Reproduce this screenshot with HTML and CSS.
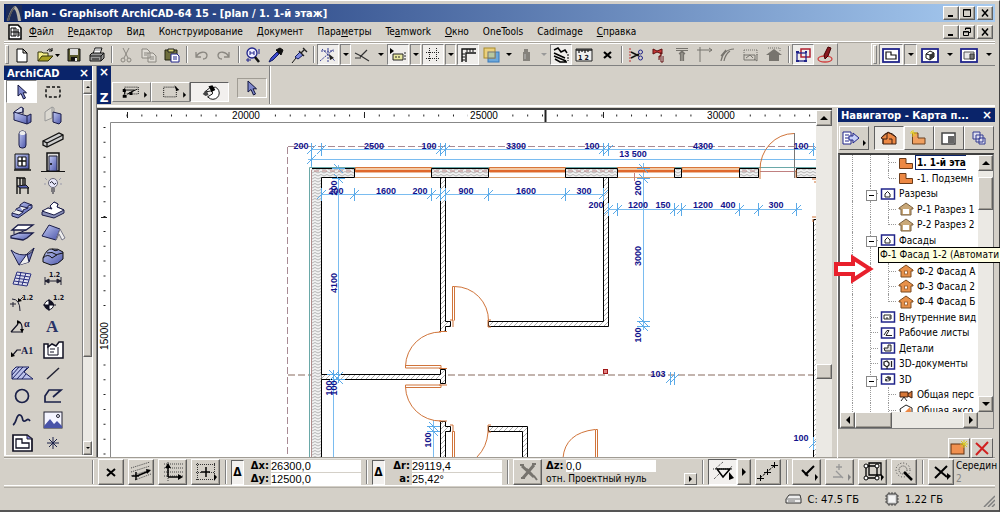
FILE: index.html
```html
<!DOCTYPE html>
<html lang="ru">
<head>
<meta charset="utf-8">
<title>plan - Graphisoft ArchiCAD-64 15</title>
<link rel="stylesheet" href="styles.css">
</head>
<body>
<svg class="defs" aria-hidden="true">
  <defs>
    <linearGradient id="gb" x1="0" y1="0" x2="1" y2="1"><stop offset="0" stop-color="#c4ccf4"/><stop offset="1" stop-color="#4a54a8"/></linearGradient>
    <pattern id="hatch" width="5" height="5" patternUnits="userSpaceOnUse"><rect width="5" height="5" fill="#fff"/><path d="M-1 6L6-1M-1 1L1-1M4 6L6 4" stroke="#999" stroke-width=".8"/></pattern>
    <pattern id="wave" width="6" height="3" patternUnits="userSpaceOnUse"><rect width="6" height="3" fill="#f2f2f2"/><path d="M0 2L3 .5L6 2" stroke="#999" stroke-width=".7" fill="none"/></pattern>
    <g id="tick"><path d="M.5-6V7M-4 5L5-4" stroke="#5aaae8" fill="none"/></g>
    <g id="tickv"><path d="M-6 .5H7M-4-4L5 5" stroke="#5aaae8" fill="none"/></g>
    <symbol id="cursor" viewBox="0 0 12 16"><path d="M2 1V12L5 9.5L7.5 15L9.5 14L7 8.8H10.5Z" fill="#7f88cc" stroke="#11143c"/></symbol>
    <symbol id="house" viewBox="0 0 16 14"><path d="M1 6L8 1L15 6V7H13V13H3V7H1Z" fill="#e8914a" stroke="#7a4a20"/><rect x="6.500" y="7" width="3" height="3" fill="#fff" stroke="#a86a38"/></symbol>
    <symbol id="section" viewBox="0 0 16 14"><path d="M1 6L8 1L15 6V7H13V13H3V7H1Z" fill="#c9a878" stroke="#7a6040"/><rect x="5" y="7" width="6" height="5" fill="#fff"/></symbol>
    <symbol id="floor" viewBox="0 0 16 14"><path d="M1.500 2.500H8V7.500H14.500V12.500H1.500Z" fill="#ec8844" stroke="#6a3a18"/></symbol>
    <symbol id="view" viewBox="0 0 16 14"><rect x="1.500" y="2" width="13" height="10" fill="#fff" stroke="#20248a" stroke-width="1.500"/></symbol>
  </defs>
</svg>
<div class="window">
  <header class="titlebar">
    <svg width="16" height="16" viewBox="0 0 16 16"><rect width="16" height="16" fill="#1d2c58"/><path d="M1 16C3 8 6 2 9 1C12 2 14 8 15 16H12C11 9 10 5 8 4C6 6 4 11 3 16Z" fill="#b8b4a8"/><path d="M3 16C5 9 7 5 8 4L9 1C6 3 3 9 1 16Z" fill="#555"/></svg>
    <h1>plan - Graphisoft ArchiCAD-64 15 - [plan / 1. 1-й этаж]</h1>
    <div class="winbtns">
      <button aria-label="Свернуть"><svg viewBox="0 0 12 10"><path d="M3 8H8" stroke="#000" stroke-width="2"/></svg></button><button aria-label="Развернуть"><svg viewBox="0 0 12 10"><path d="M2.500 1.500H9.500V8.500H2.500ZM2 2H10" fill="none" stroke="#000"/></svg></button><button class="far" aria-label="Закрыть"><svg viewBox="0 0 12 10"><path d="M3 1.500L9 8.500M9 1.500L3 8.500" stroke="#000" stroke-width="1.500"/></svg></button>
    </div>
  </header>
  <nav class="menubar">
    <svg width="14" height="16" viewBox="0 0 14 16"><path d="M1 1H10L13 4V15H1Z" fill="#fff" stroke="#000" stroke-width="1.500"/><path d="M3 4H8V12H3ZM3 8H11V12M6 4V12M10 5V13" fill="none" stroke="#000"/></svg>
    <button><u>Ф</u>айл</button><button><u>Р</u>едактор</button><button>Вид</button><button>Конструирование</button><button><u>Д</u>окумент</button><button>Пара<u>м</u>етры</button><button>Te<u>a</u>mwork</button><button><u>О</u>кно</button><button>OneTools</button><button>Cadimage</button><button><u>С</u>правка</button>
    <div class="winbtns">
      <button aria-label="Свернуть документ"><svg viewBox="0 0 12 10"><path d="M3 8H8" stroke="#000" stroke-width="2"/></svg></button><button aria-label="Восстановить документ"><svg viewBox="0 0 12 10"><path d="M4.500 3V1H9.500V5.500H8M4 1.500H10M2.500 4.500H7.500V8.500H2.500ZM2 5H8" fill="none" stroke="#000"/></svg></button><button class="far" aria-label="Закрыть документ"><svg viewBox="0 0 12 10"><path d="M3 1.500L9 8.500M9 1.500L3 8.500" stroke="#000" stroke-width="1.500"/></svg></button>
    </div>
  </nav>
  <div class="toolrow">
    <div class="toolbar">
      <i class="handle"></i>
      <button class="tb" aria-label="Новый"><svg viewBox="0 0 20 18"><path d="M5 3H11L15 7V16H5ZM11 3V7H15" fill="#fff" stroke="#000"/></svg></button>
      <button class="tb wide" aria-label="Открыть"><svg viewBox="0 0 26 18"><path d="M3 15V6H7L8 7H13V10" fill="#f4ee8a" stroke="#33330c"/><path d="M3 15L7 10H18L13 15Z" fill="#a8a020" stroke="#33330c"/><path d="M12 5C14 2 16 3 17 5M17 2V5H14" fill="none" stroke="#000"/><path d="M20 8H25L22.500 11Z"/></svg></button>
      <button class="tb" aria-label="Сохранить"><svg viewBox="0 0 20 18"><path d="M4 3H16V15H4Z" fill="#5c5c30" stroke="#111"/><rect x="6" y="3" width="8" height="6" fill="#ddd"/><rect x="7" y="11" width="6" height="4" fill="#111"/><rect x="11" y="12" width="2" height="3" fill="#eee"/></svg></button>
      <button class="tb" aria-label="Печать"><svg viewBox="0 0 20 18"><path d="M6 8L8 2H15L13 8" fill="#fff" stroke="#111"/><path d="M3 9L5 7H17V12L14 15H3Z" fill="#999" stroke="#111"/><path d="M3 10H14V15M14 10L17 7M5 13H12" fill="none" stroke="#111"/><path d="M7 4H14" stroke="#888"/></svg></button>
      <i class="sep"></i>
      <button class="tb" aria-label="Вырезать"><svg viewBox="0 0 20 18"><g fill="none" stroke="#8a8780"><path d="M7 2L12 12M13 2L8 12"/><circle cx="7" cy="14" r="2"/><circle cx="13" cy="14" r="2"/></g></svg></button>
      <button class="tb" aria-label="Копировать"><svg viewBox="0 0 20 18"><path d="M3 3H8L11 6V12H3ZM9 7H14L17 10V16H9Z" fill="#dedbd4" stroke="#8a8780"/><path d="M5 7H9M5 9H8M11 11H15M11 13H15" stroke="#8a8780"/></svg></button>
      <button class="tb" aria-label="Вставить"><svg viewBox="0 0 20 18"><path d="M3 4H15V14H3Z" fill="#6e6e3c" stroke="#222210"/><path d="M6 3H12V6H6Z" fill="#d4d070" stroke="#222"/><path d="M9 8H15L17 10V16H9Z" fill="#fff" stroke="#20248a"/><path d="M11 11H15M11 13H15" stroke="#20248a"/></svg></button>
      <i class="sep"></i>
      <button class="tb" aria-label="Отменить"><svg viewBox="0 0 20 18"><path d="M5 6V11H10M5 11C8 5 15 5 16 9C16 12 14 13 12 13" fill="none" stroke="#8a8780" stroke-width="1.300"/></svg></button>
      <button class="tb" aria-label="Повторить"><svg viewBox="0 0 20 18"><path d="M15 6V11H10M15 11C12 5 5 5 4 9C4 12 6 13 8 13" fill="none" stroke="#8a8780" stroke-width="1.300"/></svg></button>
      <i class="sep"></i>
      <button class="tb" aria-label="Найти"><svg viewBox="0 0 20 18"><circle cx="9" cy="7" r="5" fill="#eef" stroke="#20248a" stroke-width="1.300"/><path d="M7 5V9M7 7H11M11 5V9" stroke="#20248a"/><path d="M12 11L16 16" stroke="#111" stroke-width="2.500"/><path d="M3 14H8M5 12V16M16 3V8" stroke="#20248a"/></svg></button>
      <button class="tb" aria-label="Пипетка"><svg viewBox="0 0 20 18"><path d="M3 16L5 12L11 6L13 8L7 14Z" fill="#3a48c8" stroke="#111a60"/><path d="M10 4L15 9L17 4L14 2Z" fill="#111" stroke="#111"/></svg></button>
      <button class="tb" aria-label="Шприц"><svg viewBox="0 0 20 18"><path d="M3 17L7 12" stroke="#111"/><path d="M6 11L11 6L14 9L9 13Z" fill="#7f8ae0" stroke="#111a60"/><path d="M12 7L16 3M14 2L18 6M10 5L15 10" stroke="#222" stroke-width="1.300"/></svg></button>
      <i class="sep"></i>
      <button class="tb on" aria-label="Линии привязки"><svg viewBox="0 0 20 18"><path d="M2 15L16 3M4 3L17 15M3 5H16M10 2V16" stroke="#333a90" stroke-dasharray="2 1"/><path d="M11 8L16 12L12 14Z" fill="#222"/></svg></button>
      <button class="ar on2" aria-label="Параметры привязки"></button>
      <button class="tb" aria-label="Направляющие"><svg viewBox="0 0 20 18"><path d="M2 7L8 10L16 15M7 11L14 4M2 12H8" fill="none" stroke="#333" stroke-width="1.200"/></svg></button>
      <button class="ar" aria-label="Параметры направляющих"></button>
      <button class="tb on" aria-label="Табло"><svg viewBox="0 0 20 18"><path d="M2 2V8L6 5Z" fill="#000"/><path d="M5 8H15V14H5Z" fill="#e8e8a0" stroke="#222"/><path d="M7 11H13M17 6V15" stroke="#222" stroke-dasharray="2 1"/></svg></button>
      <button class="ar on2" aria-label="Параметры табло"></button>
      <button class="tb on" aria-label="Сетка"><svg viewBox="0 0 20 18"><path d="M3 6.500H17M3 12.500H17M6.500 2V16M13.500 2V16" stroke="#222" stroke-dasharray="1 1"/></svg></button>
      <button class="ar on2" aria-label="Параметры сетки"></button>
      <button class="tb on" aria-label="Линейки"><svg viewBox="0 0 20 18"><path d="M4 16V3H18M8 16V7H18" fill="none" stroke="#111" stroke-width="1.400"/><path d="M9 3V6M12 3V6M15 3V6M4 8H7M4 11H7M4 14H7" stroke="#111"/></svg></button>
      <button class="tb" aria-label="Слои"><svg viewBox="0 0 20 18"><rect x="7" y="6" width="11" height="10" fill="#6ca8dc" stroke="#3878b8"/><rect x="3" y="2" width="11" height="10" fill="#eed070" fill-opacity=".85" stroke="#a88a28"/><rect x="7" y="6" width="7" height="6" fill="#b8c8a0" stroke="#777"/></svg></button>
      <button class="ar" aria-label="Параметры слоёв"></button>
      <button class="tb" aria-label="Гравитация"><svg viewBox="0 0 20 18"><path d="M8 3H12V6H14V15H7V6H8Z" fill="#85827c"/><path d="M9 8V13" stroke="#bbb"/></svg></button>
      <button class="ar dim" aria-label="Параметры гравитации"></button>
      <button class="tb on" aria-label="Группы"><svg viewBox="0 0 20 18"><path d="M3 4L7 2L10 6L14 4L16 7M3 7L14 12M3 10L15 15M4 13L9 16H16" fill="none" stroke="#000" stroke-width="1.500"/><path d="M17 8V15" stroke="#000" stroke-dasharray="2 1"/></svg></button>
      <button class="tb" aria-label="Размеры"><svg viewBox="0 0 20 18"><path d="M2 3H18V15H2Z" fill="#eee" stroke="#222"/><path d="M2 4H18M5 4V7M8 4V6M11 4V7M14 4V6" stroke="#222" stroke-width="1.300"/><text x="4" y="14" class="mini">1 2</text></svg></button>
      <button class="tb" aria-label="Закрыть панель"><svg viewBox="0 0 20 18"><path d="M7 6L14 12M14 6L7 12" stroke="#000" stroke-width="2.200"/></svg></button>
      <i class="sep"></i>
      <button class="tb" aria-label="Разрезать"><svg viewBox="0 0 20 18"><path d="M4 2V16" stroke="#c03030" stroke-dasharray="2 1"/><path d="M5 6L13 10M5 12L13 8" stroke="#111" stroke-width="1.500"/><circle cx="14.500" cy="6" r="2" fill="none" stroke="#20248a"/><circle cx="14.500" cy="12" r="2" fill="none" stroke="#20248a"/></svg></button>
      <button class="tb" aria-label="Отсечь"><svg viewBox="0 0 20 18"><path d="M4 3L8 5L13 3V8L8 6L4 8ZM12 6V10H10V14" fill="#c83838" stroke="#601010"/><path d="M12 10V16H14V10" fill="#eee" stroke="#601010"/></svg></button>
      <button class="tb" aria-label="Удлинить"><svg viewBox="0 0 20 18"><path d="M4 2.500H16M4 4.500H16M10 5L7 8M10 5L13 8M8.500 6V15M11.500 6V15M10 5V15" stroke="#77746e" stroke-width="1.200"/></svg></button>
      <button class="tb" aria-label="Пересечь"><svg viewBox="0 0 20 18"><path d="M5 16V4H17M2 4H5V1M14 2L17 4L14 6" fill="none" stroke="#77746e"/></svg></button>
      <button class="tb" aria-label="Сопряжение"><svg viewBox="0 0 20 18"><path d="M3 15C4 8 9 3 16 3M6 15C7 10 9 7 12 5M3 10L8 4" fill="none" stroke="#77746e" stroke-width="1.200"/></svg></button>
      <button class="tb" aria-label="Изменить размер"><svg viewBox="0 0 20 18"><path d="M3 4H16M3 4V9M16 4V9" fill="none" stroke="#77746e" stroke-dasharray="1 1"/><path d="M3 9H14V14H3ZM5 12L9 9L12 12M16 8V15L13 13" fill="none" stroke="#77746e"/></svg></button>
      <button class="tb" aria-label="Подогнать к крыше"><svg viewBox="0 0 20 18"><path d="M2 9L10 3L18 9H15V15H5V9Z" fill="#77746e"/><path d="M4 2H16V5" fill="none" stroke="#77746e" stroke-dasharray="1 1"/></svg></button>
      <i class="sep"></i>
      <button class="tb on" aria-label="Сравнить"><svg viewBox="0 0 20 18"><rect x="8" y="3" width="9" height="8" fill="none" stroke="#b02030" stroke-width="1.500"/><rect x="4" y="7" width="9" height="8" fill="none" stroke="#20248a" stroke-width="1.300"/><path d="M3 6H6M3 15H6M11 15H14M12 6H14" stroke="#20248a" stroke-width="2"/></svg></button>
      <button class="tb" aria-label="Пометить"><svg viewBox="0 0 20 18"><ellipse cx="9" cy="13" rx="7" ry="3" fill="none" stroke="#d04040" stroke-width="1.300"/><path d="M9 13L8 9L12 1L15 2L12 10Z" fill="#8a1820" stroke="#400"/></svg></button>
    </div>
    <div class="toolbar second">
      <i class="handle"></i>
      <button class="tb w24 on" aria-label="План этажа"><svg viewBox="0 0 20 18"><rect x="2" y="3" width="16" height="13" fill="#fff" stroke="#20248a" stroke-width="1.800"/><path d="M5 6H10V9H15V13H5Z" fill="none" stroke="#111" stroke-width="1.200"/></svg></button>
      <button class="ar on2" aria-label="Виды плана"></button>
      <button class="tb w24" aria-label="Окно 3D"><svg viewBox="0 0 20 18"><rect x="2" y="3" width="16" height="13" fill="#fff" stroke="#20248a" stroke-width="1.800"/><path d="M6 8L10 5L14 7V11L10 14L6 12ZM6 8L10 9V14M10 9L14 7" fill="none" stroke="#111"/><path d="M10 9L14 7V11L10 14Z" fill="#333"/></svg></button>
      <button class="ar" aria-label="Виды 3D"></button>
      <button class="tb w24" aria-label="Макет"><svg viewBox="0 0 20 18"><rect x="2" y="3" width="16" height="13" fill="#fff" stroke="#20248a" stroke-width="1.800"/><path d="M5 6H15V13H5Z" fill="#e8e8e8" stroke="#555"/><path d="M11 8H15V13H11Z" fill="#777" stroke="#333"/></svg></button>
      <button class="ar" aria-label="Виды макета"></button>
    </div>
  </div>

  <main class="work">
    <aside class="palette">
      <div class="ptitle"><h2>ArchiCAD</h2><button aria-label="Закрыть палитру">×</button></div>
      <div class="pbody">
        <div class="tools">
          <button class="sel" aria-label="Указатель"><svg viewBox="0 0 26 22"><use href="#cursor" x="7" y="3" width="12" height="16"/></svg></button>
          <button aria-label="Бегущая рамка"><svg viewBox="0 0 26 22"><rect x="6" y="6" width="14" height="10" rx="1" fill="none" stroke="#111" stroke-width="1.500" stroke-dasharray="3 2"/></svg></button>
          <button aria-label="Стена"><svg viewBox="0 0 26 22"><path d="M5 8L12 3L14 4V8L5 10Z" fill="#d8dcf0" stroke="#1a1c48"/><path d="M5 8L18 12L22 10V18L18 20L5 16Z" fill="url(#gb)" stroke="#1a1c48"/><path d="M18 12V20M14 4V10" fill="none" stroke="#1a1c48"/></svg></button>
          <button aria-label="Навесная стена"><svg viewBox="0 0 26 22"><path d="M5 8L12 3V14L5 17ZM12 3L14 4V8" fill="#dcd9d2" stroke="#999"/><path d="M13 8L21 10V18L19 20L13 18Z" fill="url(#gb)" stroke="#1a1c48"/></svg></button>
          <button aria-label="Колонна"><svg viewBox="0 0 26 22"><rect x="10" y="3" width="7" height="17" rx="3" fill="url(#gb)" stroke="#1a1c48"/><ellipse cx="13.500" cy="5" rx="3" ry="2" fill="#eee"/></svg></button>
          <button aria-label="Балка"><svg viewBox="0 0 26 22"><path d="M3 13L19 5L23 7V11L7 19L3 17Z" fill="#ccc" stroke="#111" stroke-width="1.300"/><path d="M3 13L7 15V19M7 15L23 7" fill="none" stroke="#111" stroke-width="1.300"/></svg></button>
          <button aria-label="Окно"><svg viewBox="0 0 26 22"><path d="M6 3H20V18H6Z" fill="url(#gb)" stroke="#111"/><path d="M9 6H17V15H9Z" fill="#fff" stroke="#111"/><path d="M13 6V15M9 10H17M5 19H22" stroke="#111" stroke-width="1.500"/></svg></button>
          <button aria-label="Дверь"><svg viewBox="0 0 26 22"><path d="M7 2H19V20H7Z" fill="#ddd" stroke="#111" stroke-width="1.500"/><path d="M9 5H17V20H9Z" fill="url(#gb)" stroke="#223"/><path d="M1 20.500H25" stroke="#111"/><circle cx="11" cy="13" r="1"/></svg></button>
          <button aria-label="Объект"><svg viewBox="0 0 26 22"><path d="M8 3V20M8 4H16M11 4V11M14 4V11M16 4V12" stroke="#111" fill="none" stroke-width="1.400"/><path d="M8 12L17 11L20 14H11Z" fill="#5a64b8" stroke="#111"/><path d="M11 14V20M19 14V20" stroke="#111" stroke-width="1.400"/></svg></button>
          <button aria-label="Лампа"><svg viewBox="0 0 26 22"><circle cx="13" cy="9" r="4.500" fill="#e8e8fa" stroke="#667"/><path d="M10 9Q12 6 13 9T16 9M11 15H15M11 17H15M12 19H14" fill="none" stroke="#223"/><path d="M5 4L7 6M21 4L19 6M4 10H6M22 10H20" stroke="#99a"/></svg></button>
          <button aria-label="Лестница"><svg viewBox="0 0 26 22"><path d="M3 15L7 13V11L11 9V7L15 4L23 7V10L9 20L3 18Z" fill="url(#gb)" stroke="#1a1c48"/><path d="M3 15L10 17L14 14L8 12M14 14V12L19 10L11 8M19 10V8L23 7" fill="#eee" stroke="#1a1c48"/></svg></button>
          <button aria-label="Перекрытие"><svg viewBox="0 0 26 22"><path d="M2 14L8 10L12 11L10 9L14 4L18 6L17 9L24 12V15L14 20L2 17Z" fill="#8a90b8" stroke="#1a1c48"/><path d="M2 13L8 10L12 11L10 8L14 4L18 6L17 9L24 12L14 17Z" fill="#fff" stroke="#1a1c48"/></svg></button>
          <button aria-label="Крыша"><svg viewBox="0 0 26 22"><path d="M3 9L9 4H24L17 9Z" fill="#fff" stroke="#1a1c48" stroke-width="1.300"/><path d="M2 15L10 12H24L18 17L14 19L2 17Z" fill="url(#gb)" stroke="#1a1c48" stroke-width="1.300"/><path d="M5 9V13M17 9L10 12" stroke="#1a1c48"/></svg></button>
          <button aria-label="Оболочка"><svg viewBox="0 0 26 22"><path d="M2 15L9 4L20 8L16 19Z" fill="url(#gb)" stroke="#1a1c48"/><path d="M20 8L25 17L22 19L19 13L16 19Z" fill="#eee" stroke="#778"/></svg></button>
          <button aria-label="Сетка поверхности"><svg viewBox="0 0 26 22"><path d="M2 5Q10 12 20 9Q24 7 25 3L20 17L10 20Z" fill="url(#gb)" stroke="#1a1c48"/><path d="M10 20L18 9L20 17M18 9L25 3" fill="#eee" stroke="#1a1c48"/></svg></button>
          <button aria-label="Морф"><svg viewBox="0 0 26 22"><path d="M3 13Q7 3 12 4Q18 3 23 7V14Q18 20 11 20L3 17Z" fill="url(#gb)" stroke="#111"/><path d="M3 13Q8 8 12 13Q18 8 23 8M7 8Q12 6 17 10M12 4Q15 7 18 5" fill="none" stroke="#111"/></svg></button>
          <button aria-label="Зона"><svg viewBox="0 0 26 22"><path d="M8 4L22 6L18 18L4 16ZM6 10L20 12M7 7L21 9M5 13L19 15M12 4L9 17M17 5L13 17" fill="#dde" stroke="#2a3080"/></svg></button>
          <button aria-label="Размер"><svg viewBox="0 0 26 22"><text x="9" y="9" class="mini">1.2</text><path d="M5 9V17M21 9V17M5 13H21M5 13L9 11V15ZM21 13L17 11V15Z" stroke="#223" fill="#223"/></svg></button>
          <button aria-label="Радиальный размер"><svg viewBox="0 0 26 22"><path d="M3 7Q11 7 11 19M10 9L14 5M1 12H7M4 10V15" fill="none" stroke="#223"/><path d="M9 10V6L13 9Z"/><text x="13" y="8" class="mini">1.2</text></svg></button>
          <button aria-label="Отметка уровня"><svg viewBox="0 0 26 22"><circle cx="9" cy="13" r="4.500" fill="#fff" stroke="#112"/><path d="M9 13V8.500A4.500 4.500 0 0 1 13.500 13ZM9 13V17.500A4.500 4.500 0 0 1 4.500 13Z" fill="#112"/><path d="M3 13H16M9 7V19" stroke="#112"/><text x="13" y="8" class="mini">1.2</text></svg></button>
          <button aria-label="Угловой размер"><svg viewBox="0 0 26 22"><path d="M2 17L9 9M2 17H14M9 6Q14 8 13 16" fill="none" stroke="#112" stroke-width="1.200"/><path d="M8 9V5L12 8ZM11 14H15L13 18Z"/><text x="15" y="12" class="serif">α</text></svg></button>
          <button aria-label="Текст"><svg viewBox="0 0 26 22"><text x="6" y="17" class="bigA">A</text></svg></button>
          <button aria-label="Выноска"><svg viewBox="0 0 26 22"><path d="M3 17L8 11H12" fill="none" stroke="#112" stroke-width="1.200"/><path d="M2 18V13L6 17Z"/><text x="12" y="15" class="serif">A1</text></svg></button>
          <button aria-label="Маркер"><svg viewBox="0 0 26 22"><path d="M4 5H8V8L12 5L16 7L19 3H23V19H4Z" fill="#fff" stroke="#112" stroke-width="1.500"/><path d="M8 7V16H18V8M10 10H15M10 13H14" fill="none" stroke="#112"/></svg></button>
          <button aria-label="Штриховка"><svg viewBox="0 0 26 22"><path d="M3 9L7 5H20L15 10L24 17H3Z" fill="#bcc2ea" stroke="#1a2060"/><path d="M3 13L10 5M3 17L14 5M8 17L18 6M13 17L17 12" stroke="#1a2060"/></svg></button>
          <button aria-label="Линия"><svg viewBox="0 0 26 22"><path d="M7 17L19 6" stroke="#223" stroke-width="1.500"/></svg></button>
          <button aria-label="Окружность"><svg viewBox="0 0 26 22"><circle cx="13" cy="11" r="6.500" fill="none" stroke="#1a2048" stroke-width="1.700"/></svg></button>
          <button aria-label="Полилиния"><svg viewBox="0 0 26 22"><path d="M21 17H5V11L9 5H21L13 12" fill="none" stroke="#1a2048" stroke-width="1.700"/></svg></button>
          <button aria-label="Сплайн"><svg viewBox="0 0 26 22"><path d="M4 16C8 14 7 5 11 6C15 7 12 13 16 12C18 11 19 9 21 12" fill="none" stroke="#1a2048" stroke-width="1.700"/></svg></button>
          <button aria-label="Рисунок"><svg viewBox="0 0 26 22"><rect x="4" y="3" width="18" height="16" fill="#f4f4ff" stroke="#223"/><path d="M4 17L10 10L14 15L17 12L22 17V19H4Z" fill="#4a54a8"/><circle cx="18" cy="7" r="1.500" fill="none" stroke="#223"/></svg></button>
          <button aria-label="Чертёж"><svg viewBox="0 0 26 22"><path d="M4 3H18L23 7V19H4Z" fill="#fff" stroke="#112" stroke-width="1.700"/><path d="M18 3V7H23Z" fill="#88e" stroke="#223"/><path d="M7 7H13V11H20V16H7Z" fill="none" stroke="#112" stroke-width="1.300"/></svg></button>
          <button aria-label="Узловая точка"><svg viewBox="0 0 26 22"><path d="M13 5V17M7 11H19M9 7L17 15M17 7L9 15" stroke="#1a2048"/></svg></button>
        </div>
        <div class="vscroll thin"><button class="sbtn up" aria-label="Вверх"></button><i class="thumb long"></i><i class="space"></i><button class="sbtn down" aria-label="Вниз"></button></div>
      </div>
    </aside>

    <section class="right">
      <div class="dock">
        <div class="dockcap"><button aria-label="Закрыть панель">×</button><span>Z</span></div>
        <div class="dockbtns">
          <button class="db" aria-label="Метод 1"><svg viewBox="0 0 38 18"><path d="M12 4H26V11H12Z" fill="none" stroke="#111" stroke-dasharray="1 1"/><path d="M11 13L13 7H22L15 11L25 6" fill="none" stroke="#111"/><path d="M10 6h3v3h-3zM10 12h4v3h-4zM17 9h3v3h-3z"/><path d="M32 9V15L35 12Z"/></svg></button><button class="db" aria-label="Метод 2"><svg viewBox="0 0 38 18"><path d="M12 4H25V14H12Z" fill="none" stroke="#111" stroke-dasharray="1 1"/><path d="M23 2L28 7L25 8Z"/><path d="M32 9V15L35 12Z"/></svg></button><button class="db on" aria-label="Магнит"><svg viewBox="0 0 38 18"><path d="M14 9L19 5L25 4A6.500 6.500 0 0 1 20 16L17 14L22 11Q23 8 20 8Z" fill="#fff" stroke="#111"/><path d="M18 3L22 2L25 7L21 9Z"/><path d="M12 11L16 7L18 12L15 13Z" fill="#444"/></svg></button>
        </div>
        <button class="dcur" aria-label="Указатель"><svg width="12" height="16"><use href="#cursor" width="12" height="16"/></svg></button>
        <i class="dend"></i>
      </div>
      <div class="lower">
        <div class="canvas">
          <svg class="plan" role="img" aria-label="План этажа">
            <g transform="translate(-98 -110)">
              <rect x="98" y="109" width="900" height="500" fill="#fff"/>
              <g class="dim">
                <path d="M311 149.500H817M308 159.500H817M318 194.500H605M606 209.500H802M311.500 145V168M338.500 165V376M643.500 163V330M333.500 375V460M433.500 420V460"/>
              </g>
              <path d="M287.500 147V460M288 146.500H817" fill="none" stroke="#a88a94" stroke-dasharray="7 3"/>
              <path d="M288 375H817" stroke="#b09c94" stroke-width="1.500" stroke-dasharray="7 3"/>
              <path d="M309.500 460V167.500H817" fill="none" stroke="#6aa8a8"/>
              <path d="M355 177.500H432M489 177.500H566M617 177.500H675M682 177.500H740" stroke="#d8a070"/>
              <g fill="#f3c9a4" stroke="#d8763a"><path d="M355.500 167.500H431.500V172H355.500ZM489.500 167.500H565.500V172H489.500ZM617.500 167.500H674.500V172H617.500ZM682 167.500H739.500V172H682Z"/><path d="M356 171H431M490 171H565M618 171H674M683 171H739" stroke="#e0682c" stroke-width="2"/></g>
              <path d="M760 171.500H796M634.500 173V181" stroke="#c08080"/>
              <path d="M311.500 460V168.500H354.500V177.500H321.500V460" fill="url(#wave)"/>
              <path d="M312 168.500H354.500V177.500H321.500V460" fill="none" stroke="#000"/>
              <path d="M311.500 170V460" stroke="#b08c8c"/>
              <g fill="url(#wave)" stroke="#000"><path d="M431.500 168.500H488.500V177.500H431.500ZM565.500 168.500H617.500V177.500H565.500ZM674.500 168.500H681.500V177.500H674.500ZM739.500 168.500H758.500V177.500H739.500ZM796.500 168.500H830V177.500H796.500Z"/></g>
              <path d="M314 171H352M434 171H487M568 171H615M742 171H757" stroke="#b88080" stroke-dasharray="5 3"/>
              <g fill="url(#hatch)" stroke="#000">
                <path d="M440.500 178V331.500H445.500V326.500H450.500V321.500H445.500V178"/>
                <path d="M603.500 178V321.500H488.500V326.500H608.500V178"/>
                <path d="M321.500 374.500H440.500V369.500H445.500V383.500H440.500V379.500H321.500"/>
                <path d="M440.500 460V421.500H445.500V426.500H450.500V431.500H445.500V460"/>
                <path d="M522.500 460V431.500H488.500V426.500H527.500V460"/>
                <path d="M813.500 460V219.500H830V460"/>
              </g>
              <g fill="none" stroke="#d0743a">
                <path d="M452.500 320.500V286.500H454.500V320.500M454.500 286.500A34 34 0 0 1 488.500 321M450 320H453V327M491 320H488V327H491"/>
                <path d="M441 332A35 35 0 0 0 405.500 366M405.500 365.500H441V368H405.500ZM439 331.500H447M439 368.500H447"/>
                <path d="M441 421A35 35 0 0 1 405.500 387M405.500 385H441V387.500H405.500ZM439 385H447M439 421H447"/>
                <path d="M452.500 460V431.500H454.500V460M488 432Q487 447 477 457M450 425H453V432M491 425H488V432H491"/>
                <path d="M595.500 460V429.500H597.500V460M595 429.500Q565 433 563 458"/>
                <path d="M794 133.500A34 36 0 0 0 760 170V179M796 170V178M812 179h6M814 182h4M812 217h6M813 219v3"/>
              </g>
              <path d="M794.500 133V178" stroke="#777"/>
              <g><use href="#tick" x="311" y="149"/><use href="#tick" x="321" y="149"/><use href="#tick" x="440" y="149"/><use href="#tick" x="445" y="149"/><use href="#tick" x="603" y="149"/><use href="#tick" x="608" y="149"/><use href="#tick" x="813" y="149"/><use href="#tick" x="311" y="159"/>
                <use href="#tick" x="321" y="194"/><use href="#tick" x="354" y="194"/><use href="#tick" x="431" y="194"/><use href="#tick" x="440" y="194"/><use href="#tick" x="445" y="194"/><use href="#tick" x="488" y="194"/><use href="#tick" x="565" y="194"/><use href="#tick" x="603" y="194"/>
                <use href="#tick" x="608" y="209"/><use href="#tick" x="617" y="209"/><use href="#tick" x="674" y="209"/><use href="#tick" x="681" y="209"/><use href="#tick" x="739" y="209"/><use href="#tick" x="758" y="209"/><use href="#tick" x="796" y="209"/>
                <use href="#tick" x="670" y="378"/><use href="#tick" x="674" y="378"/><use href="#tick" x="813" y="443"/><use href="#tick" x="333" y="376"/><use href="#tick" x="338" y="376"/>
                <use href="#tickv" x="338" y="168"/><use href="#tickv" x="338" y="178"/><use href="#tickv" x="643" y="168"/><use href="#tickv" x="643" y="178"/><use href="#tickv" x="643" y="321"/><use href="#tickv" x="643" y="326"/><use href="#tickv" x="333" y="374"/><use href="#tickv" x="338" y="379"/><use href="#tickv" x="433" y="426"/><use href="#tickv" x="433" y="431"/></g>
              <rect x="603.500" y="369.500" width="4" height="4" fill="#e08080" stroke="#a01818"/>
              <g class="dimtext">
                <text x="301" y="149">200</text><text x="374" y="149">2500</text><text x="429" y="149">100</text><text x="516" y="149">3300</text><text x="592" y="149">100</text><text x="703" y="149">4300</text><text x="801" y="149">100</text><text x="633" y="157">13 500</text>
                <text x="336" y="194">200</text><text x="386" y="194">1600</text><text x="420" y="194">200</text><text x="466" y="194">900</text><text x="526" y="194">1600</text><text x="584" y="194">300</text>
                <text x="596" y="208">200</text><text x="638" y="208">1200</text><text x="663" y="208">150</text><text x="703" y="208">1200</text><text x="728" y="208">400</text><text x="776" y="208">300</text>
                <text x="658" y="377">103</text><text x="801" y="441">100</text>
                <text transform="translate(337 188) rotate(-90)">200</text><text transform="translate(337 283) rotate(-90)">4100</text><text transform="translate(641 188) rotate(-90)">200</text><text transform="translate(641 256) rotate(-90)">3000</text><text transform="translate(641 335) rotate(-90)">100</text><text transform="translate(332 388) rotate(-90)">100</text><text transform="translate(337 388) rotate(-90)">100</text><text transform="translate(431 440) rotate(-90)">100</text>
              </g>
              <path d="M98 109H998V122H110V600H98Z" fill="#fff"/>
              <path d="M110.500 600V122.500H998" fill="none" stroke="#888"/>
              <g stroke="#222" fill="none"><path d="M126.500 115.500H817" stroke-width="2" stroke-dasharray="1 13.840"/><path d="M127.500 112V118M364.500 112V118M603.500 112V118"/><path d="M545.500 110V122" stroke-width="2"/><path d="M104.500 127V457" stroke-width="2" stroke-dasharray="1 13.840"/><path d="M101 217.500H107"/></g>
              <path d="M230 110H262V121H230ZM468 110H500V121H468ZM705 110H737V121H705ZM100 318H110V352H100Z" fill="#fff"/>
              <g class="rultext"><text x="246" y="119">20000</text><text x="484" y="119">25000</text><text x="721" y="119">30000</text><text transform="translate(108 336) rotate(-90)">15000</text></g>
            </g>
          </svg>
          <div class="vscroll"><button class="sbtn up" aria-label="Прокрутить вверх"></button><i class="space big"></i><i class="thumb short"></i><i class="space"></i></div>
        </div>

        <aside class="navigator">
          <div class="ptitle"><h2>Навигатор - Карта п...</h2><button aria-label="Закрыть навигатор">×</button></div>
          <div class="navbtns">
            <button class="first" aria-label="Проект"><svg width="26" height="20" viewBox="0 0 26 20"><path d="M2 4H10V16H2Z" fill="#fff" stroke="#20248a"/><path d="M4 7H8M4 10H8M4 13H8" stroke="#20248a"/><path d="M8 8H12V5L18 10L12 15V12H8Z" fill="#c8d0f8" stroke="#20248a"/><path d="M22 12V18L25 15Z"/></svg></button><button class="on" aria-label="Карта проекта"><svg width="18" height="16"><path d="M1 8L8 2L16 7V14H3V9Z" fill="#ec8844" stroke="#402010"/><path d="M1 8Q8-2 16 7M7 3V9H3V14M9 9H12V14" fill="none" stroke="#402010"/></svg></button><button aria-label="Карта видов"><svg width="18" height="16"><path d="M2.500 3H8V8H15V14H2.500Z" fill="#f0a060" stroke="#6a4020"/><path d="M3 0V7M0 3H7M1 1L6 6" stroke="#e8d020"/></svg></button><button aria-label="Книга макетов"><svg width="18" height="16"><rect x="2" y="3" width="13" height="11" fill="#fff" stroke="#444" stroke-width="1.500"/><rect x="8" y="6" width="6" height="7" fill="#666"/></svg></button><button aria-label="Публикатор"><svg width="18" height="16"><path d="M3 2H10V9H3ZM6 5H13V12H6ZM9 8H15V14H9Z" fill="#dde" stroke="#333a90"/></svg></button>
          </div>
          <div class="treebox">
            <div class="treemain">
              <ul class="tree">
                <li><i></i><i></i><i class="h"></i><svg><use href="#floor" width="16" height="14"/></svg><b>1. 1-й эта</b></li>
                <li><i></i><i></i><i class="h end"></i><svg><use href="#floor" width="16" height="14"/></svg><span>-1. Подземн</span></li>
                <li><i></i><i class="h ex"></i><svg><use href="#view" width="16" height="14"/><path d="M5 7L7.500 4.500L10 7V10H5Z" fill="none" stroke="#222"/></svg><span>Разрезы</span></li>
                <li><i></i><i></i><i class="h"></i><svg><use href="#section" width="16" height="14"/></svg><span>Р-1 Разрез 1</span></li>
                <li><i></i><i></i><i class="h end"></i><svg><use href="#section" width="16" height="14"/></svg><span>Р-2 Разрез 2</span></li>
                <li><i></i><i class="h ex"></i><svg><use href="#view" width="16" height="14"/><path d="M5 7L7.500 4.500L10 7V10H5Z" fill="none" stroke="#222"/></svg><span>Фасады</span></li>
                <li><i></i><i></i><i class="h"></i></li>
                <li><i></i><i></i><i class="h"></i><svg><use href="#house" width="16" height="14"/></svg><span>Ф-2 Фасад А</span></li>
                <li><i></i><i></i><i class="h"></i><svg><use href="#house" width="16" height="14"/></svg><span>Ф-3 Фасад 2</span></li>
                <li><i></i><i></i><i class="h end"></i><svg><use href="#house" width="16" height="14"/></svg><span>Ф-4 Фасад Б</span></li>
                <li><i></i><i class="h"></i><svg><use href="#view" width="16" height="14"/><path d="M4 5H11V9H4ZM7 7V9M10 6V8" fill="none" stroke="#222"/></svg><span>Внутренние вид</span></li>
                <li><i></i><i class="h"></i><svg><use href="#view" width="16" height="14"/><path d="M4 9L7 4.500H9L6 9.500H12" fill="none" stroke="#222"/></svg><span>Рабочие листы</span></li>
                <li><i></i><i class="h"></i><svg><use href="#view" width="16" height="14"/><path d="M4 7H8V4H11V10H5Z" fill="#ddd" stroke="#222"/></svg><span>Детали</span></li>
                <li><i></i><i class="h"></i><svg><use href="#view" width="16" height="14"/><path d="M4 5L7 4L9 6V8L7 10L4 8ZM7 10V12M11.500 4V10" fill="none" stroke="#222" stroke-width="1.300"/></svg><span>3D-документы</span></li>
                <li><i></i><i class="h ex"></i><svg><use href="#view" width="16" height="14"/><path d="M5 6L8 4L11 5V8L8 10L5 9Z" fill="#444"/><path d="M5 6L8 7V10" fill="none" stroke="#fff"/></svg><span>3D</span></li>
                <li><i></i><i></i><i class="h"></i><svg><path d="M2 4H10V9H2ZM10 6L14 3V10L10 8" fill="#d87838" stroke="#402010"/><path d="M6 9L3 13M6 9L9 13" stroke="#222"/></svg><span>Общая перс</span></li>
                <li><i></i><i></i><i class="h"></i><svg><path d="M2 6L8 2L14 5V12H3Z" fill="#fff" stroke="#222"/><path d="M4 12L12 4L14 12Z" fill="#ec8844"/></svg><span>Общая аксо</span></li>
              </ul>
              <div class="vscroll"><button class="sbtn up" aria-label="Вверх по дереву"></button><i class="space gap"></i><i class="thumb nav"></i><i class="space"></i><button class="sbtn down" aria-label="Вниз по дереву"></button></div>
            </div>
            <div class="hrow"><div class="hscroll"><button class="sbtn left" aria-label="Влево"></button><i class="thumb"></i><i class="space"></i><button class="sbtn rt" aria-label="Вправо"></button></div></div>
          </div>
          <div class="navfoot"><button aria-label="Новый этаж"><svg width="18" height="16"><rect x="1" y="4" width="13" height="10" fill="#f09050" stroke="#603010"/><path d="M14 0V8M10 4H18M11 1L17 7M17 1L11 7" stroke="#d8c820"/></svg></button><button aria-label="Удалить"><svg width="18" height="16"><path d="M3 3L15 14M15 2L3 15" stroke="#d02020" stroke-width="2"/></svg></button></div>
          <div class="tooltip" role="tooltip">Ф-1 Фасад 1-2 (Автомати</div>
          <svg class="redarrow" width="40" height="30"><path d="M2 10H19V4L36 15L19 26V20H2Z" fill="#fff" stroke="#e8202c" stroke-width="4"/></svg>
        </aside>
      </div>
    </section>
  </main>

  <div class="coordbar">
    <i class="sep"></i>
    <button class="cb" aria-label="Закрыть"><svg width="22" height="20"><path d="M7 7L15 14M15 7L7 14" stroke="#000" stroke-width="2"/></svg></button>
    <button class="cb" aria-label="Поворот сетки"><svg width="22" height="22"><path d="M1 7L20 1M1 11L20 5M1 15L20 9M5 19L21 13" stroke="#444" stroke-dasharray="1 1"/><path d="M2 15H9M6 11V19M7 15L19 10" stroke="#000" stroke-width="1.500"/><path d="M16 8L21 9L17 13Z"/></svg></button>
    <button class="cb w29" aria-label="Начало координат"><svg width="22" height="22"><path d="M2 3H21M2 7H21M2 11H21M2 15H21M6 1V20" stroke="#444" stroke-dasharray="1 1"/><path d="M6 16V4M6 16H19" stroke="#000" stroke-width="1.500"/><path d="M3 7L6 2L9 7ZM16 13L21 16L16 19Z"/></svg></button>
    <button class="cb w29" aria-label="Сетка"><svg width="24" height="22"><path d="M2 3.500H21M2 18.500H21M3.500 2V20M20.500 2V18M2 11.500H8M15 11.500H21" stroke="#333" stroke-dasharray="1 1"/><path d="M7 11H16M12 6V16" stroke="#000" stroke-width="1.500"/><path d="M20 13V20L23 16Z"/></svg></button>
    <i class="sep"></i>
    <button class="delta" aria-label="Относительные XY">Δ</button>
    <div class="fields"><label for="dx">Δx:</label><input id="dx" value="26300,0"><label for="dy">Δy:</label><input id="dy" value="12500,0"></div>
    <i class="sep"></i>
    <button class="delta" aria-label="Относительные полярные">Δ</button>
    <div class="fields"><label for="dr">Δr:</label><input id="dr" value="29119,4"><label for="an">a:</label><input id="an" value="25,42°"></div>
    <i class="sep"></i>
    <button class="cb w29" aria-label="Фиксация"><svg width="22" height="22"><path d="M5 5L17 16M17 4L6 17M9 8L15 14" stroke="#77746e" stroke-width="3"/><path d="M3 4H7M15 3H19M4 17H8M17 15L20 19" stroke="#77746e" stroke-width="2"/></svg></button>
    <div class="zfield"><div><label for="dz">Δz:</label><input id="dz" value="0,0"></div><div><span>отн. Проектный нуль</span><button class="mini-r" aria-label="Выбрать уровень"></button></div></div>
    <i class="sep"></i>
    <button class="cb w29 on" aria-label="Направляющие"><svg width="24" height="22"><path d="M2 8H21M12 1L4 8M13 15L21 5M3 18L9 12" stroke="#333" stroke-dasharray="1 1"/><path d="M6 8H19L12 16Z" fill="none" stroke="#000" stroke-width="1.500"/><path d="M18 11V19L23 17Z"/></svg></button>
    <button class="cb w14" aria-label="Ещё"><svg width="8" height="10"><path d="M2 1V9L6 5Z"/></svg></button>
    <button class="cb" aria-label="Точки"><svg width="22" height="22"><path d="M3 17L18 4" stroke="#000" stroke-dasharray="3 1"/><path d="M3.500 14V20M0 17.500H7M17.500 1V7M14 4.500H21M10.500 8V14M7 11.500H14" stroke="#000"/></svg></button>
    <i class="sep"></i>
    <button class="cb w29" aria-label="Перпендикуляр"><svg width="24" height="22"><path d="M7 9L13 15M10 14L19 5" fill="none" stroke="#000" stroke-width="2"/><path d="M20 13V20L23 16Z"/></svg></button>
    <button class="cb w29" aria-label="Смещение"><svg width="24" height="22"><path d="M11 3V9M8 6H14M8 10L15 17M5 16H14" fill="none" stroke="#999" stroke-width="1.300"/><path d="M20 13V20L23 16Z" fill="#888"/></svg></button>
    <button class="cb w29" aria-label="Группа"><svg width="24" height="22"><path d="M5 5H16V17H5ZM8 2H20V14H8Z" fill="none" stroke="#000" stroke-width="1.300"/><g fill="#fff" stroke="#000"><circle cx="5" cy="5" r="2"/><circle cx="16" cy="5" r="2"/><circle cx="5" cy="17" r="2"/><circle cx="16" cy="17" r="2"/></g><path d="M20 13V20L23 16Z"/></svg></button>
    <button class="cb" aria-label="Волшебная палочка"><svg width="22" height="22"><circle cx="10" cy="9" r="7" fill="none" stroke="#444" stroke-dasharray="1 2"/><circle cx="10" cy="9" r="4" fill="none" stroke="#444" stroke-dasharray="1 1"/><path d="M11 11L19 19" stroke="#000" stroke-width="2.500"/></svg></button>
    <i class="sep"></i>
    <button class="cb" aria-label="Привязка"><svg width="22" height="20"><path d="M5 5L17 15M17 4L5 16" stroke="#000" stroke-width="2"/><path d="M17 11V18L21 14Z"/></svg></button>
    <div class="mid">Середин<span>2</span></div>
  </div>
  <footer class="status">
    <span><svg width="17" height="11"><path d="M1 5L4 1H15L16 5V9H1Z" fill="#eee" stroke="#333"/><path d="M1 5H16M3 7H10" stroke="#777"/></svg>C: 47.5 ГБ</span>
    <span><svg width="14" height="14"><path d="M4 0V14M7 0V14M10 0V14M0 4H14M0 7H14M0 10H14" stroke="#555"/><rect x="2" y="2" width="10" height="10" rx="1" fill="#ddd" stroke="#333"/><rect x="4" y="4" width="6" height="6" fill="#f4f4f4"/></svg>1.22 ГБ</span>
    <svg class="grip" width="12" height="12"><path d="M1 12L12 1M5 12L12 5M9 12L12 9" stroke="#808080" stroke-width="1.500"/></svg>
  </footer>
</div>
</body>
</html>
```

FILE: styles.css
```css
* { box-sizing: border-box; }
body {
  margin: 0;
  background: #d4d0c8;
  color: #000;
  font-family: "DejaVu Sans Condensed", "DejaVu Sans", sans-serif;
  font-size: 11px;
  overflow: hidden;
}
button, input { font: inherit; color: inherit; padding: 0; margin: 0; border: 0; border-radius: 0; background: none; }
button { display: flex; align-items: center; justify-content: center; }
h1, h2, ul { margin: 0; padding: 0; font-size: inherit; }
.defs { position: absolute; width: 0; height: 0; }
.window {
  display: flex;
  flex-direction: column;
  height: 100vh;
  padding: 3px 4px 0;
  border-bottom: 2px solid #555;
  border-right: 1px solid #404040;
  border-top: 1px solid #fff;
}

/* title and menu */
.titlebar {
  display: flex;
  align-items: center;
  gap: 2px;
  height: 18px;
  padding: 0 2px;
  background: linear-gradient(90deg, #0a246a, #a6caf0);
  color: #fff;
}
.titlebar h1 { font-size: 11px; font-weight: bold; white-space: nowrap; }
.winbtns { display: flex; margin-left: auto; }
.winbtns button, .sbtn, .cb, .db, .navbtns button, .navfoot button, .mini-r, .thumb {
  background: #d4d0c8;
  border: 1px solid;
  border-color: #fff #606060 #606060 #fff;
}
.winbtns button { width: 16px; height: 14px; box-shadow: inset -1px -1px #a09c94; }
.winbtns svg { width: 12px; height: 10px; }
.winbtns .far { margin-left: 2px; }
.menubar { display: flex; align-items: center; height: 20px; padding: 0 2px 0 4px; border-bottom: 1px solid #fff; font-size: 10px; }
.menubar > button { padding: 0 7px; height: 18px; }

/* toolbars */
.toolrow { display: flex; height: 24px; border-bottom: 1px solid #808080; border-top: 1px solid #a8a49c; }
.toolbar { display: flex; align-items: center; gap: 1px; padding-left: 1px; border-top: 1px solid #fff; border-right: 1px solid #808080; }
.toolbar.second { margin-left: auto; border-right: 0; border-left: 1px solid #fff; }
.handle { width: 4px; height: 19px; margin-right: 1px; border: 1px solid; border-color: #fff #808080 #808080 #fff; flex: none; }
.sep { flex: none; width: 5px; align-self: stretch; margin: 2px 0; background: linear-gradient(90deg, transparent 2px, #808080 2px, #808080 3px, #fff 3px, #fff 4px, transparent 4px); }
.tb { width: 22px; height: 21px; flex: none; }
.tb svg { width: 20px; height: 18px; }
.tb.wide { width: 28px; }
.tb.wide svg { width: 26px; }
.tb.w24 { width: 24px; }
.on { background: #efedea; border: 1px solid; border-color: #808080 #fff #fff #808080; }
.ar { width: 11px; height: 21px; flex: none; }
.second .ar { width: 13px; }
.ar::after { content: ""; border: 3px solid transparent; border-top-color: #000; border-bottom: 0; }
.ar.dim::after { border-top-color: #999; }
.on2 { border: 1px solid; border-color: #808080 #fff #fff #808080; }
.mini { font: bold 7px "DejaVu Sans Condensed", sans-serif; fill: #112; }
.serif { font: bold 10px "Liberation Serif", serif; fill: #1a2048; }
.bigA { font: bold 17px "Liberation Serif", serif; fill: #2a3468; }

/* working area */
.work { flex: 1; display: flex; min-height: 0; }
.palette { width: 89px; flex: none; display: flex; flex-direction: column; border-right: 1px solid #fff; border-bottom: 1px solid #fff; margin-bottom: 2px; }
.ptitle { display: flex; align-items: center; justify-content: space-between; height: 14px; padding: 0 3px; background: #0a246a; color: #fff; flex: none; }
.ptitle h2 { font: bold 10px "DejaVu Sans", sans-serif; white-space: nowrap; }
.ptitle button, .dockcap button { font: bold 12px/12px "DejaVu Sans", sans-serif; color: #fff; }
.pbody { flex: 1; display: flex; min-height: 0; border-left: 2px solid #fff; }
.tools { flex: 1; display: grid; grid-template-columns: 31px 31px; grid-auto-rows: 1fr; border-right: 1px solid #808080; }
.tools button { min-height: 0; }
.tools svg { width: 26px; height: 22px; }
.tools .sel { background: #fff; border: 1px solid; border-color: #808080 #fff #fff #808080; }

/* scroll bars */
.vscroll { width: 16px; flex: none; display: flex; flex-direction: column; background: #ebe9e4; }
.vscroll.thin { width: 9px; }
.sbtn { width: 100%; height: 16px; flex: none; box-shadow: inset -1px -1px #a09c94; }
.thin .sbtn { height: 14px; }
.sbtn::after { content: ""; border: 4px solid transparent; }
.thin .sbtn::after { border-width: 2px; }
.sbtn.up::after { border-bottom-color: #000; border-top: 0; }
.sbtn.down::after { border-top-color: #000; border-bottom: 0; }
.sbtn.left::after { border-right-color: #000; border-left: 0; }
.sbtn.rt::after { border-left-color: #000; border-right: 0; }
.space { flex: 1; }
.space.big { flex: 3; }
.space.gap { flex: 0 0 6px; }
.thumb { flex: none; box-shadow: inset -1px -1px #a09c94; }
.thumb.long { flex: 0 0 70%; }
.thumb.short { height: 15px; }
.thumb.nav { height: 33px; }

/* docked panel */
.right { flex: 1; min-width: 0; display: flex; flex-direction: column; margin-left: 3px; border-left: 1px solid #808080; }
.dock { display: flex; height: 41px; flex: none; border-bottom: 2px solid #fff; padding-bottom: 1px; }
.dockcap { width: 14px; background: #0a246a; color: #fff; display: flex; flex-direction: column; align-items: center; justify-content: space-between; }
.dockcap span { font: bold 12px/12px "DejaVu Sans", sans-serif; }
.dockbtns { display: flex; align-items: flex-end; padding: 0 0 2px 1px; }
.db { width: 39px; height: 20px; border-color: #fff #808080 #808080 #fff; }
.db.on { background: #f2f0ee; border-color: #606060 #fff #fff #606060; }
.db svg { width: 37px; height: 18px; }
.dcur { width: 30px; height: 20px; margin: 12px 2px 0 8px; border: 1px solid #a09c94; border-right-color: #fff; border-bottom-color: #fff; }
.dend { width: 2px; border-left: 1px solid #808080; border-right: 1px solid #fff; }
.lower { flex: 1; display: flex; min-height: 0; margin-top: 1px; }
.canvas { flex: 1; min-width: 0; display: flex; border-left: 1px solid #404040; border-top: 2px solid #404040; }
.plan { flex: 1; min-width: 0; width: 100%; height: 100%; overflow: hidden; }
.dim path { fill: none; stroke: #7abcf0; }
.dimtext { font: bold 9px "Liberation Sans", sans-serif; fill: #12128c; text-anchor: middle; }
.rultext { font: 10px "Liberation Sans", sans-serif; text-anchor: middle; fill: #000; }

/* navigator */
.navigator { position: relative; width: 158px; flex: none; margin-left: 5px; display: flex; flex-direction: column; border-left: 1px solid #fff; }
.navbtns { display: flex; padding: 4px 1px 3px 1px; }
.navbtns button { width: 30px; height: 24px; }
.navbtns .first { margin-right: 5px; }
.navbtns .on { background: #eceae6; border-color: #606060 #fff #fff #606060; }
.treebox { flex: 1; min-height: 0; display: flex; flex-direction: column; background: #fff; border: 1px solid #808080; border-top: 2px solid #404040; border-left: 2px solid #606060; margin-right: 1px; }
.treemain { flex: 1; min-height: 0; display: flex; overflow: hidden; }
.treemain .vscroll { width: 15px; }
.tree { flex: 1; min-width: 0; display: grid; grid-auto-rows: 1fr; height: calc(100% + 6px); padding-left: 3px; list-style: none; font-size: 10px; }
.tree li { display: flex; align-items: center; min-height: 0; white-space: nowrap; }
.tree i { position: relative; width: 18px; flex: none; align-self: stretch; }
.tree i::before { content: ""; position: absolute; left: 9px; top: 0; bottom: 0; border-left: 1px dotted #999; }
.tree i.end::before { bottom: 50%; }
.tree i.h { background: repeating-linear-gradient(90deg, #999 0 1px, transparent 1px 2px) 10px 50% / 8px 1px no-repeat; }
.tree i.ex::after { content: ""; position: absolute; left: 5px; top: 4px; width: 9px; height: 9px; border: 1px solid #888; background: linear-gradient(#000, #000) center / 5px 1px no-repeat #fff; }
.tree svg { width: 16px; height: 14px; margin: 0 1px; flex: none; }
.tree span, .tree b { padding: 0 2px; line-height: 13px; }
.tree b { border: 1px solid #0a246a; border-right: 0; padding: 0 0 0 1px; }
.hrow { display: flex; height: 16px; flex: none; background: #d4d0c8; }
.hscroll { flex: 1; display: flex; margin-right: 15px; background: #ebe9e4; }
.hscroll .sbtn { width: 15px; }
.hscroll .thumb { width: 37px; }
.navfoot { display: flex; justify-content: flex-end; gap: 1px; padding: 9px 2px 0; }
.navfoot button { width: 22px; height: 20px; }
.tooltip { position: absolute; left: 40px; top: 139px; right: -5px; height: 16px; padding-left: 1px; border: 1px solid #000; border-right: 0; background: #ffffe1; font-size: 10px; line-height: 14px; white-space: nowrap; }
.redarrow { position: absolute; left: -4px; top: 146px; }

/* coordinates */
.coordbar { display: flex; align-items: center; gap: 4px; height: 28px; flex: none; padding-left: 87px; border-bottom: 1px solid #fff; border-top: 1px solid #e8e6e2; box-shadow: 0 -1px #a09c94; }
.cb { width: 26px; height: 26px; flex: none; box-shadow: inset -1px -1px #a09c94; }
.cb.w29 { width: 29px; }
.cb.w14 { width: 14px; margin-left: -4px; }
.cb.on { background: #f2f0ee; border-color: #606060 #fff #fff #606060; box-shadow: none; }
.coordbar .sep { margin: 1px -1px; }
.delta { width: 13px; height: 25px; flex: none; background: #f2f0ee; border: 1px solid; border-color: #606060 #fff #fff #606060; font-weight: bold; font-size: 12px; }
.fields { display: grid; grid-template-columns: 21px 90px; gap: 1px 2px; align-items: center; flex: none; font: bold 10px "DejaVu Sans", sans-serif; }
.fields label { text-align: right; }
.fields input, .zfield input { width: 90px; height: 12px; background: #fff; font: 11px "Liberation Sans", sans-serif; }
.zfield { width: 151px; flex: none; display: flex; flex-direction: column; gap: 1px; }
.zfield div { display: flex; align-items: center; height: 12px; }
.zfield label { width: 20px; font: bold 10px "DejaVu Sans", sans-serif; }
.zfield span { flex: 1; font-size: 10px; white-space: nowrap; }
.mini-r { width: 13px; height: 12px; }
.mini-r::after { content: ""; border: 3px solid transparent; border-left-color: #000; border-right: 0; }
.mid { flex: 1; min-width: 0; margin-left: -2px; font-size: 10px; line-height: 13px; white-space: nowrap; }
.mid span { display: block; color: #888; }

/* status */
.status { display: flex; align-items: center; justify-content: flex-end; gap: 26px; height: 23px; flex: none; margin-top: 1px; border-top: 1px solid #b0aca4; }
.status span { display: flex; align-items: center; gap: 6px; }
.status .grip { align-self: flex-end; margin-bottom: 3px; margin-left: 14px; }
```
